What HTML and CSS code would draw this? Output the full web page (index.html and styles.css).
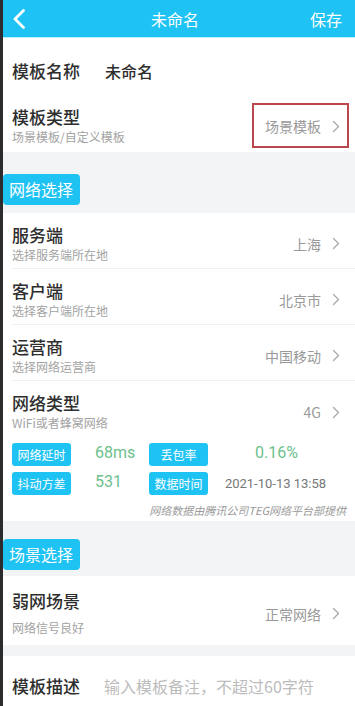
FILE: index.html
```html
<!DOCTYPE html>
<html lang="zh-CN">
<head>
<meta charset="utf-8">
<title>未命名</title>
<link rel="stylesheet" href="styles.css">
</head>
<body>
<div class="page">
  <header class="topbar">
    <svg class="back" width="14" height="20" viewBox="0 0 14 20"><path d="M11.5 1.5 L3 10 L11.5 18.5" fill="none" stroke="#fff" stroke-width="2.8" stroke-linecap="round" stroke-linejoin="round"/></svg>
    <div class="title">未命名</div>
    <div class="save">保存</div>
  </header>
  <main class="content">
    <section class="card">
      <div class="row row-name">
        <span class="label">模板名称</span>
        <span class="name-value">未命名</span>
      </div>
      <div class="row row-type">
        <div class="texts">
          <div class="label">模板类型</div>
          <div class="sub">场景模板/自定义模板</div>
        </div>
        <div class="value boxed">场景模板<svg class="chev" width="8" height="13" viewBox="0 0 8 13"><path d="M1.5 1.5 L6.5 6.5 L1.5 11.5" fill="none" stroke="#aaa" stroke-width="1.4" stroke-linecap="round" stroke-linejoin="round"/></svg></div>
      </div>
    </section>

    <div class="section-head first"><span class="badge">网络选择</span></div>

    <section class="card">
      <div class="row item">
        <div class="texts">
          <div class="label">服务端</div>
          <div class="sub">选择服务端所在地</div>
        </div>
        <div class="value">上海<svg class="chev" width="8" height="13" viewBox="0 0 8 13"><path d="M1.5 1.5 L6.5 6.5 L1.5 11.5" fill="none" stroke="#aaa" stroke-width="1.4" stroke-linecap="round" stroke-linejoin="round"/></svg></div>
      </div>
      <div class="row item">
        <div class="texts">
          <div class="label">客户端</div>
          <div class="sub">选择客户端所在地</div>
        </div>
        <div class="value">北京市<svg class="chev" width="8" height="13" viewBox="0 0 8 13"><path d="M1.5 1.5 L6.5 6.5 L1.5 11.5" fill="none" stroke="#aaa" stroke-width="1.4" stroke-linecap="round" stroke-linejoin="round"/></svg></div>
      </div>
      <div class="row item">
        <div class="texts">
          <div class="label">运营商</div>
          <div class="sub">选择网络运营商</div>
        </div>
        <div class="value">中国移动<svg class="chev" width="8" height="13" viewBox="0 0 8 13"><path d="M1.5 1.5 L6.5 6.5 L1.5 11.5" fill="none" stroke="#aaa" stroke-width="1.4" stroke-linecap="round" stroke-linejoin="round"/></svg></div>
      </div>
      <div class="row item last">
        <div class="texts">
          <div class="label">网络类型</div>
          <div class="sub">WiFi或者蜂窝网络</div>
        </div>
        <div class="value">4G<svg class="chev" width="8" height="13" viewBox="0 0 8 13"><path d="M1.5 1.5 L6.5 6.5 L1.5 11.5" fill="none" stroke="#aaa" stroke-width="1.4" stroke-linecap="round" stroke-linejoin="round"/></svg></div>
      </div>
      <div class="stats">
        <span class="tag">网络延时</span>
        <span class="num">68ms</span>
        <span class="tag">丢包率</span>
        <span class="num center">0.16%</span>
        <span class="tag">抖动方差</span>
        <span class="num">531</span>
        <span class="tag">数据时间</span>
        <span class="time">2021-10-13 13:58</span>
      </div>
      <div class="note">网络数据由腾讯公司TEG网络平台部提供</div>
    </section>

    <div class="section-head second"><span class="badge">场景选择</span></div>

    <section class="card">
      <div class="row scene">
        <div class="texts">
          <div class="label">弱网场景</div>
          <div class="sub gap">网络信号良好</div>
        </div>
        <div class="value">正常网络<svg class="chev" width="8" height="13" viewBox="0 0 8 13"><path d="M1.5 1.5 L6.5 6.5 L1.5 11.5" fill="none" stroke="#aaa" stroke-width="1.4" stroke-linecap="round" stroke-linejoin="round"/></svg></div>
      </div>
    </section>

    <div class="spacer"></div>

    <section class="card">
      <div class="row desc">
        <span class="label">模板描述</span>
        <span class="placeholder">输入模板备注，不超过60字符</span>
      </div>
    </section>
  </main>
</div>
</body>
</html>
```

FILE: styles.css
```css
* { box-sizing: border-box; }
html, body { margin: 0; padding: 0; }
body {
  width: 355px;
  height: 706px;
  overflow: hidden;
  background: #f3f4f6;
  font-family: "Noto Sans CJK SC", "Noto Sans", sans-serif;
  color: #333;
}
.page {
  display: flex;
  flex-direction: column;
  min-height: 706px;
  border-left: 3px solid #2c2c2e;
}
.page > *, .content > * { flex-shrink: 0; }
.topbar {
  height: 38px;
  background: #1fc3f3;
  display: flex;
  align-items: center;
  padding: 0 13px 0 9px;
  border-bottom: 1px solid #bfeefd;
}
.back { flex: none; }
.title {
  flex: 1;
  text-align: center;
  color: #fff;
  font-size: 16px;
  line-height: 22px;
  padding-left: 14px;
}
.save {
  color: #fff;
  font-size: 16px;
  line-height: 22px;
}
.content {
  flex: 1;
  display: flex;
  flex-direction: column;
}
.card { background: #fff; }
.row {
  display: flex;
  align-items: center;
  justify-content: space-between;
  padding-left: 9px;
  padding-right: 15px;
}
.label {
  font-size: 17px;
  line-height: 22px;
  font-weight: 500;
  color: #2e2e2e;
}
.sub {
  font-size: 12px;
  line-height: 18px;
  color: #a3a3a3;
}
.sub.gap { margin-top: 7px; }
.value {
  display: flex;
  align-items: center;
  gap: 11px;
  font-size: 14px;
  line-height: 20px;
  color: #999;
}
.chev { flex: none; }
.row-name {
  justify-content: flex-start;
  padding-top: 22px;
  padding-bottom: 15px;
}
.name-value {
  margin-left: 25px;
  font-size: 16px;
  line-height: 22px;
  font-weight: 500;
  color: #2e2e2e;
}
.row-type {
  padding-top: 9px;
  padding-bottom: 6px;
}
.boxed { position: relative; }
.boxed::after {
  content: "";
  position: absolute;
  top: -13px;
  bottom: -12px;
  left: -13px;
  right: -9px;
  border: 2px solid #b9474b;
}
.section-head {
  display: flex;
}
.section-head.first { padding: 22px 0 8px; }
.section-head.second { padding: 18px 0 6px; }
.badge {
  background: #1fc3f3;
  color: #fff;
  font-size: 16px;
  line-height: 31px;
  height: 31px;
  padding: 0 7px 0 6px;
  border-radius: 4px;
}
.item {
  height: 56px;
  padding-top: 6px;
}
.item .texts { align-self: flex-start; padding-top: 5px; }
.item:not(.last) { border-bottom: 1px solid #f0f0f0; margin-left: 9px; padding-left: 0; }
.stats {
  display: grid;
  grid-template-columns: 59px 78px 59px 1fr;
  grid-auto-rows: 23px;
  row-gap: 6px;
  align-items: center;
  padding: 6px 0 0 9px;
}
.tag {
  background: #1fc3f3;
  color: #fff;
  font-size: 12px;
  line-height: 23px;
  height: 23px;
  text-align: center;
  border-radius: 3px;
}
.num {
  font-family: "Roboto", "Noto Sans", sans-serif;
  font-size: 16px;
  line-height: 20px;
  color: #6cbf8c;
  padding-left: 24px;
  margin-top: -4px;
}
.num.center { padding-left: 0; text-align: center; padding-right: 10px; }
.time {
  font-family: "Roboto", "Noto Sans", sans-serif;
  font-size: 13px;
  line-height: 18px;
  color: #777;
  text-align: center;
  padding-right: 12px;
}
.note {
  text-align: right;
  font-size: 11px;
  line-height: 16px;
  font-style: italic;
  color: #9a9a9a;
  padding: 7px 9px 3px 0;
}
.scene {
  padding-top: 14px;
  padding-bottom: 8px;
}
.spacer { height: 11px; }
.desc {
  justify-content: flex-start;
  padding-top: 19px;
  padding-bottom: 20px;
}
.placeholder {
  margin-left: 24px;
  font-size: 16px;
  line-height: 22px;
  color: #bcbcbc;
}
```
